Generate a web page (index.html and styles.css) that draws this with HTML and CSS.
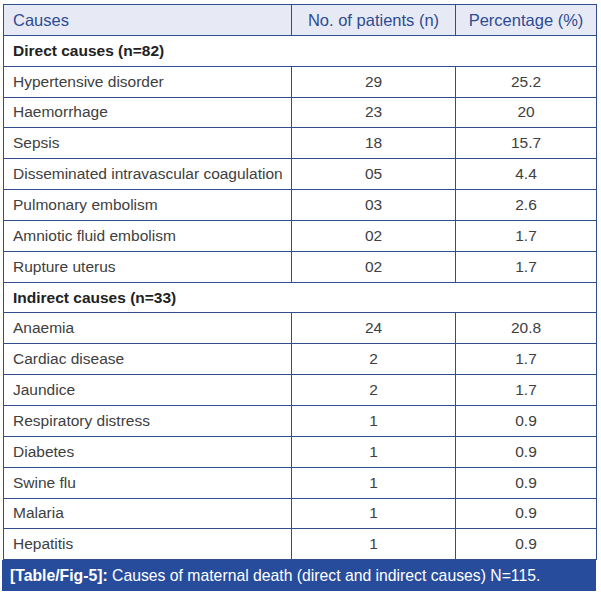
FILE: index.html
```html
<!DOCTYPE html>
<html>
<head>
<meta charset="utf-8">
<link rel="stylesheet" href="styles.css">
</head>
<body>
<div class="wrap">
<table class="tbl">
  <colgroup><col class="c1"><col class="c2"><col class="c3"></colgroup>
  <thead>
    <tr><th>Causes</th><th class="num">No. of patients (n)</th><th class="num">Percentage (%)</th></tr>
  </thead>
  <tbody>
    <tr class="sec"><td>Direct causes (n=82)</td><td></td><td></td></tr>
    <tr><td>Hypertensive disorder</td><td class="num">29</td><td class="num">25.2</td></tr>
    <tr><td>Haemorrhage</td><td class="num">23</td><td class="num">20</td></tr>
    <tr><td>Sepsis</td><td class="num">18</td><td class="num">15.7</td></tr>
    <tr><td>Disseminated intravascular coagulation</td><td class="num">05</td><td class="num">4.4</td></tr>
    <tr><td>Pulmonary embolism</td><td class="num">03</td><td class="num">2.6</td></tr>
    <tr><td>Amniotic fluid embolism</td><td class="num">02</td><td class="num">1.7</td></tr>
    <tr><td>Rupture uterus</td><td class="num">02</td><td class="num">1.7</td></tr>
    <tr class="sec"><td>Indirect causes (n=33)</td><td></td><td></td></tr>
    <tr><td>Anaemia</td><td class="num">24</td><td class="num">20.8</td></tr>
    <tr><td>Cardiac disease</td><td class="num">2</td><td class="num">1.7</td></tr>
    <tr><td>Jaundice</td><td class="num">2</td><td class="num">1.7</td></tr>
    <tr><td>Respiratory distress</td><td class="num">1</td><td class="num">0.9</td></tr>
    <tr><td>Diabetes</td><td class="num">1</td><td class="num">0.9</td></tr>
    <tr><td>Swine flu</td><td class="num">1</td><td class="num">0.9</td></tr>
    <tr><td>Malaria</td><td class="num">1</td><td class="num">0.9</td></tr>
    <tr><td>Hepatitis</td><td class="num">1</td><td class="num">0.9</td></tr>
  </tbody>
</table>
<div class="caption"><b>[Table/Fig-5]:</b> Causes of maternal death (direct and indirect causes) N=115.</div>
</div>
</body>
</html>
```

FILE: styles.css
```css
html, body {
  margin: 0;
  padding: 0;
  background: #ffffff;
}
body {
  font-family: "Liberation Sans", Arial, sans-serif;
}
.wrap {
  padding: 4px 0 0 3px;
  width: 593px;
}
.tbl {
  border-collapse: collapse;
  width: 593px;
  table-layout: fixed;
  font-size: 15.5px;
  color: #404040;
}
.c1 { width: 288px; }
.c2 { width: 164px; }
.c3 { width: 141px; }
.tbl th, .tbl td {
  border: 1px solid #2f4d8f;
  height: 30.85px;
  padding: 0 0 0 9px;
  box-sizing: border-box;
  text-align: left;
  white-space: nowrap;
  line-height: 18px;
}
.tbl th {
  background: #e7eaf4;
  color: #2d4b93;
  font-weight: normal;
  font-size: 16.5px;
}
.tbl th.num, .tbl td.num {
  text-align: center;
  padding: 0;
}
.tbl .sec td {
  color: #222222;
  font-weight: bold;
}
.tbl .sec td:first-child {
  border-right: none;
}
.tbl .sec td:nth-child(2) {
  border-left: none;
  border-right: none;
}
.tbl .sec td:nth-child(3) {
  border-left: none;
}
.caption {
  margin-left: -1px;
  width: 594px;
  height: 31px;
  box-sizing: border-box;
  background: #284c9c;
  color: #ffffff;
  font-size: 15.75px;
  line-height: 31px;
  padding-left: 8px;
  white-space: nowrap;
}
.caption b {
  font-weight: bold;
}
```
